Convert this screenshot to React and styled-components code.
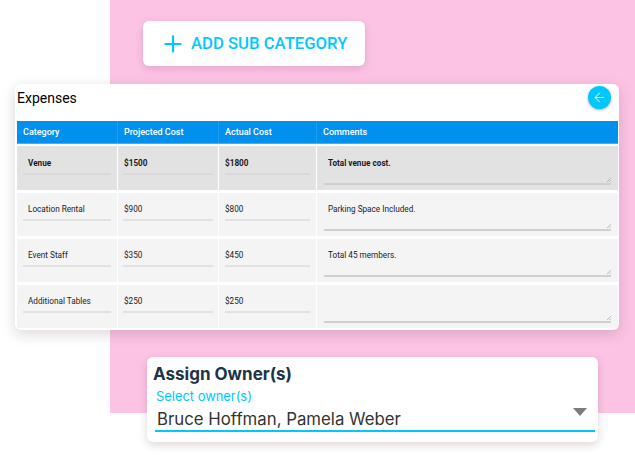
import React from 'react';
import styled, { createGlobalStyle } from 'styled-components';
import { ArrowLeft, Plus } from 'lucide-react';

const rows = [
  { category: 'Venue', projected: '$1500', actual: '$1800', comment: 'Total venue cost.', total: true },
  { category: 'Location Rental', projected: '$900', actual: '$800', comment: 'Parking Space Included.' },
  { category: 'Event Staff', projected: '$350', actual: '$450', comment: 'Total 45 members.' },
  { category: 'Additional Tables', projected: '$250', actual: '$250', comment: '' },
];

const App = () => {
  return (
    <>
      <GlobalStyle />
      <Page>
        <AddButton>
          <Plus size={26} strokeWidth={2} />
          ADD SUB CATEGORY
        </AddButton>

        <Card>
          <CardHeader>
            <CardTitle>Expenses</CardTitle>
            <BackButton>
              <ArrowLeft size={15} strokeWidth={1.5} />
            </BackButton>
          </CardHeader>

          <HeadRow>
            <HeadCell>Category</HeadCell>
            <HeadCell>Projected Cost</HeadCell>
            <HeadCell>Actual Cost</HeadCell>
            <HeadCell>Comments</HeadCell>
          </HeadRow>

          <Rows>
            {rows.map((row) => (
              <Row key={row.category} $total={row.total}>
                <Cell $inset={6} $text={5}>
                  <Field $total={row.total}>{row.category}</Field>
                </Cell>
                <Cell $inset={5} $text={1}>
                  <Field $total={row.total}>{row.projected}</Field>
                </Cell>
                <Cell $inset={6} $text={0}>
                  <Field $total={row.total}>{row.actual}</Field>
                </Cell>
                <Cell $inset={7} $text={4}>
                  <CommentField $total={row.total}>
                    {row.comment}
                    <Grip viewBox="0 0 5 5">
                      <path d="M0 5 5 0M3 5 5 3" stroke="#9a9a9a" strokeWidth="0.8" fill="none" />
                    </Grip>
                  </CommentField>
                </Cell>
              </Row>
            ))}
          </Rows>
        </Card>

        <OwnerCard>
          <OwnerTitle>Assign Owner(s)</OwnerTitle>
          <OwnerLabel>Select owner(s)</OwnerLabel>
          <OwnerSelect>
            Bruce Hoffman, Pamela Weber
            <Caret />
          </OwnerSelect>
        </OwnerCard>
      </Page>
    </>
  );
};

export default App;

const GlobalStyle = createGlobalStyle`
  html, body {
    margin: 0;
    padding: 0;
    background: #fff;
  }
`;

const Page = styled.div`
  width: 635px;
  height: 455px;
  overflow: hidden;
  box-sizing: border-box;
  padding: 21px 16px 0 15px;
  display: flex;
  flex-direction: column;
  font-family: Roboto, sans-serif;
  background: linear-gradient(#fdc3e5, #fdc3e5) 110px 0 / 525px 413px no-repeat;
`;

const AddButton = styled.div`
  align-self: flex-start;
  margin-left: 128px;
  width: 222px;
  height: 45px;
  box-sizing: border-box;
  padding-left: 17px;
  display: flex;
  align-items: center;
  gap: 5px;
  background: #fff;
  border-radius: 6px;
  box-shadow: 0 3px 8px rgba(120, 60, 100, 0.2);
  color: #00c8ff;
  font-size: 16.7px;
  font-weight: 500;
  white-space: nowrap;
`;

const Card = styled.div`
  margin-top: 18px;
  width: 604px;
  height: 246px;
  box-sizing: border-box;
  padding: 0 1px 0 2px;
  background: #fff;
  border-radius: 6px;
  box-shadow: 0 4px 14px rgba(60, 30, 50, 0.18);
`;

const CardHeader = styled.div`
  height: 37px;
  display: flex;
  justify-content: space-between;
  align-items: flex-start;
  padding-right: 7px;
`;

const CardTitle = styled.div`
  margin-top: 6px;
  font-size: 14px;
  line-height: 17px;
  color: #000;
`;

const BackButton = styled.div`
  margin-top: 2px;
  width: 23px;
  height: 23px;
  border-radius: 50%;
  display: flex;
  align-items: center;
  justify-content: center;
  background: #00c8ff;
  color: #fff;
  box-shadow: 0 1px 3px rgba(0, 0, 0, 0.3);
`;

const columns = '100px 100px 97px 1fr';

const HeadRow = styled.div`
  display: grid;
  grid-template-columns: ${columns};
  column-gap: 1px;
  height: 23px;
  box-sizing: border-box;
  background: #0091ee;
  border-bottom: 1px solid #3fb0f5;
`;

const HeadCell = styled.div`
  margin-right: -1px;
  padding-left: 6px;
  font-size: 9px;
  font-weight: 500;
  line-height: 22px;
  color: #fff;
  border-right: 1px solid rgba(255, 255, 255, 0.12);

  &:last-child {
    margin-right: 0;
    border-right: 0;
  }
`;

const Rows = styled.div`
  margin-top: 2px;
  display: flex;
  flex-direction: column;
  gap: 3px;
`;

const Row = styled.div`
  display: grid;
  grid-template-columns: ${columns};
  column-gap: 1px;
  height: ${(p) => (p.$total ? 44 : 43)}px;
  background: #fff;
  font-weight: ${(p) => (p.$total ? 700 : 400)};
  --cell: ${(p) => (p.$total ? '#e2e2e2' : '#f4f4f4')};
  --rule: ${(p) => (p.$total ? '#d8d8d8' : '#e2e2e2')};
  --pad: ${(p) => (p.$total ? 10 : 9)}px;
`;

const Cell = styled.div`
  background: var(--cell);
  box-sizing: border-box;
  padding: var(--pad) ${(p) => p.$inset}px 0;
  --text: ${(p) => p.$text}px;
`;

const Field = styled.div`
  height: 19px;
  box-sizing: border-box;
  padding-left: var(--text);
  border-bottom: 2px solid var(--rule);
  font-size: 8.2px;
  line-height: 14px;
  color: #1c1c1c;
  white-space: nowrap;
`;

const CommentField = styled(Field)`
  position: relative;
  height: 29px;
  border-bottom-color: #cfcfcf;
`;

const Grip = styled.svg`
  position: absolute;
  right: 0;
  bottom: 1px;
  width: 4px;
  height: 4px;
`;

const OwnerCard = styled.div`
  margin: 27px 0 0 132px;
  width: 451px;
  height: 85px;
  box-sizing: border-box;
  padding: 7px 3px 0 6px;
  background: #fff;
  border-radius: 6px;
  box-shadow: 0 3px 8px rgba(60, 30, 50, 0.18);
  font-family: Inter, sans-serif;
`;

const OwnerTitle = styled.div`
  font-size: 17px;
  font-weight: 700;
  line-height: 21px;
  color: #1d3346;
`;

const OwnerLabel = styled.div`
  margin: 4px 0 0 3px;
  font-size: 12.9px;
  line-height: 15px;
  color: #00c8ff;
`;

const OwnerSelect = styled.div`
  position: relative;
  margin: 0 0 0 2px;
  height: 28px;
  box-sizing: border-box;
  padding: 4px 0 0 2px;
  border-bottom: 2px solid #00c8ff;
  font-size: 16.8px;
  line-height: 22px;
  color: #333;
  white-space: nowrap;
`;

const Caret = styled.span`
  position: absolute;
  right: 8px;
  top: 4px;
  border-left: 7px solid transparent;
  border-right: 7px solid transparent;
  border-top: 8px solid #7d7d7d;
`;
